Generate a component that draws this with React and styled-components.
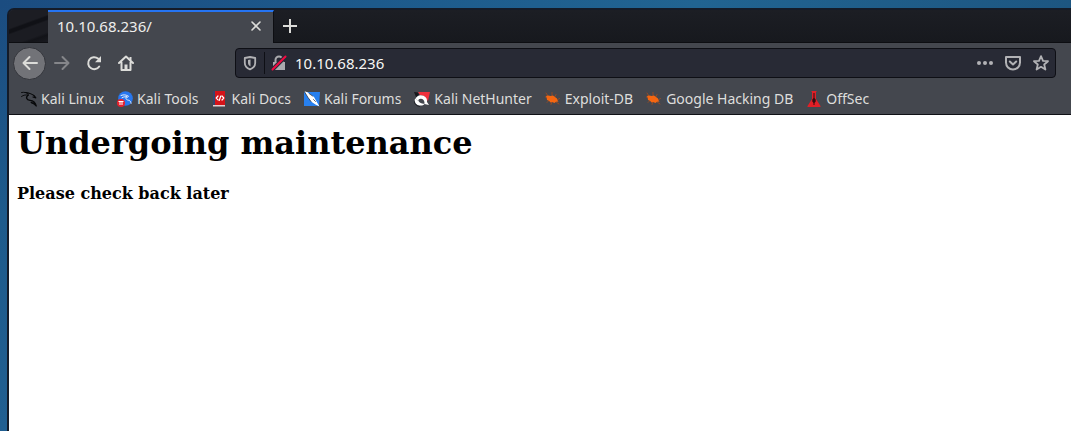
import React from "react";
import styled, { createGlobalStyle } from "styled-components";

const GlobalStyle = createGlobalStyle`
  * { box-sizing: border-box; }
  html, body { margin: 0; }
  button, input { font: inherit; color: inherit; }
`;

const Desktop = styled.div`
  min-height: 100vh;
  display: flex;
  padding: 8px 0 0 7px;
  background:
    linear-gradient(90deg, #1b4c80 0%, #1d5a8c 35%, #216492 65%, #1d5681 100%) top / 100% 8px no-repeat,
    linear-gradient(180deg, #1b4c80, #1e5b8c 50%, #215f91);
`;

const BrowserWindow = styled.div`
  flex: 1;
  min-width: 0;
  display: flex;
  flex-direction: column;
  border: solid #141b28;
  border-width: 2px 0 0 2px;
  border-radius: 7px 0 0 0;
  background: #44474e;
  color: #eeeeec;
  font: 15px/20px "Noto Sans", sans-serif;
  overflow: hidden;
`;

const TabStrip = styled.div`
  height: 33px;
  display: flex;
  background: linear-gradient(#1c1e24, #17191e);
  border-bottom: 1px solid #0d0e12;
`;

const WindowCorner = styled.div`
  width: 39px;
  background: linear-gradient(160deg, #1c1d23 0 40%, #101116 44% 50%, #1b1c22 54% 78%, #121318 84%, #191a20);
`;

const Tab = styled.div`
  width: 226px;
  height: 33px;
  display: flex;
  align-items: center;
  justify-content: space-between;
  padding: 0 9px 3px;
  border-top: 2px solid #2574f3;
  border-right: 1px solid #0d0e12;
  background: #44474e;
`;

const IconButton = styled.button`
  width: ${(p) => p.$size || 32}px;
  height: ${(p) => p.$size || 32}px;
  display: grid;
  place-items: center;
  flex: none;
  padding: 0;
  border: ${(p) => (p.$round ? "1px solid #33353b" : "0")};
  border-radius: 50%;
  background: ${(p) => (p.$round ? "#727378" : "transparent")};
  color: ${(p) => p.$color || "#dcdcd9"};
`;

const Toolbar = styled.div`
  height: 40px;
  display: flex;
  align-items: center;
  padding: 0 15px 0 4px;
`;

const NavButtons = styled.div`
  width: 222px;
  display: flex;
  align-items: center;
  flex: none;
`;

const AddressBar = styled.div`
  flex: 1;
  min-width: 0;
  height: 30px;
  display: flex;
  align-items: center;
  padding: 0 0 0 1px;
  border: 1px solid #0e0f15;
  border-radius: 4px;
  background: #282a35;
`;

const Divider = styled.span`
  width: 1px;
  height: 22px;
  margin-left: 1px;
  background: #0e0f15;
`;

const AddressInput = styled.input`
  flex: 1;
  min-width: 0;
  padding: 0 0 0 2px;
  border: 0;
  outline: 0;
  background: transparent;
  color: #f6f6f4;
`;

const Bookmarks = styled.nav`
  height: 32px;
  display: flex;
  align-items: center;
  gap: 13px;
  padding: 0 12px;
  border-bottom: 1px solid #101116;
  white-space: nowrap;
  color: #dededc;
  font-size: 14px;
`;

const Bookmark = styled.a`
  display: flex;
  align-items: center;
  gap: 4px;
  color: inherit;
  text-decoration: none;
`;

const Page = styled.main`
  flex: 1;
  padding: 8px;
  background: #fff;
  color: #000;
  font-family: "DejaVu Serif", serif;
`;

const Title = styled.h1`
  margin: 0 0 21px;
  font-size: 32px;
  line-height: 40px;
`;

const Notice = styled.h4`
  margin: 0;
  font-size: 16px;
  line-height: 20px;
`;

const Icon = ({ children, ...rest }) => (
  <svg width="16" height="16" viewBox="0 0 16 16" fill="none" stroke="currentColor" strokeWidth="2"
    strokeLinecap="round" strokeLinejoin="round" aria-hidden="true" {...rest}>
    {children}
  </svg>
);

const Dragon = () => (
  <Icon stroke="#07080a" strokeWidth=".9">
    <path d="M.5 1.500C3.500 1 5.500 1.500 7.500 3M.5 5.500C2.500 4 5 3.500 7.500 4.200" />
    <path d="M4.500 1.500C8 2 11.500 3 13.500 5l1.300 1.800-2.800-.8" strokeWidth="1.200" />
    <path d="M7 4C4.500 6.500 5.500 9 9 9.300c3.500.3 5.500 2.200 6.200 5.700-1.200-2.200-2.700-3-5-3.500" strokeWidth="1.300" />
  </Icon>
);

const Tools = () => (
  <Icon stroke="none">
    <circle cx="8.500" cy="7.500" r="7.300" fill="#2777ef" />
    <path d="M4 4.500c3-1.200 5-.8 7.500.8M5 6.800c2-1.300 3.800-1.300 5.500-.6M9.500 5.500c-1.500 2.600 0 3.300 2.300 3.800 1.500.4 2 1.500 2.300 3" stroke="#e5edfa" strokeWidth="1" />
    <circle cx="4" cy="12" r="4" fill="#e6202c" />
    <path d="M1.500 10.500h5M3 10.500V14M5 10.500V14" stroke="#fff" strokeWidth="1" strokeLinecap="butt" />
  </Icon>
);

const Docs = () => (
  <Icon stroke="none">
    <path d="M1 0h12v15H1z" fill="#d51319" />
    <path d="M1 0h2v14H1z" fill="#34466f" />
    <path d="M1 14h12v1.500H1z" fill="#e3cfd1" />
    <path d="M6 5 4.200 7 6 8.800M10 5l1.800 2L10 9M8.800 5 7.200 9.500" stroke="#fff" strokeWidth="1.200" />
  </Icon>
);

const Forums = () => (
  <Icon stroke="none">
    <path d="M0 1h16l-1 14H0z" fill="#2780ef" />
    <path d="M0 0 4 1.500l6 4.500 2.500 4.500 3 5-4-2-4.500-3L4 6.500z" fill="#fff" />
    <path d="m0 0 4 6.500 3 4M9.500 8.500l2 2M5 2.500l3.500 2.500" stroke="#23252b" strokeWidth=".7" />
  </Icon>
);

const NetHunter = () => (
  <Icon stroke="none">
    <path d="M4 1h12l-2 9-4-5-4-1z" fill="#f0303c" />
    <path d="m0 1 4 .5L5 4 2 6z" fill="#17181d" />
    <path d="M1.500 8C3 4.500 6 3.500 9.500 4.800c3 1.200 4 4 3.500 6.200l2 3-4.500-1c.2-3-.8-5-3.300-5.300C5 7.500 4 8.500 4.500 10z" fill="#fff" />
    <path d="M1 7.500c-1 3.500 1 6.500 4.500 7 2.500.4 4.800-.5 5.500-2-2 .6-5 0-6.500-2.500z" fill="#fff" />
    <path d="M0 10.500c.5 2.500 2.500 4.500 5.500 5" stroke="#17181d" strokeWidth=".8" />
  </Icon>
);

const Bug = () => (
  <Icon stroke="#a54c20" strokeWidth=".8">
    <path d="m1 2 2 3M7 1.500V6M0 6h3M11 3.500 9 7M2 11.500l3-3M6 13.500l1-3M14.500 7.500 12 9M14 13l-3-2" />
    <path d="m1 5 2-.5L6 5l2-.5 2 1.500 2 1.500.3 1.500 1.200 1.500-2.500.3L9.500 12 7 11l-1.500.5L4 9.800 2 9l-.3-2z" fill="#f46611" stroke="none" />
  </Icon>
);

const OffSec = () => (
  <Icon stroke="none">
    <path d="M5 0h6l-1 1v7l4.500 7v1h-13v-1L6 8V1z" fill="#e01f27" />
    <path d="M7.500 2h1v5l1.200 1.500v2L8.500 12v2h-1v-2l-1.200-1.500v-2L7.500 7z" fill="#310c10" />
  </Icon>
);

const bookmarks = [
  ["Kali Linux", Dragon],
  ["Kali Tools", Tools],
  ["Kali Docs", Docs],
  ["Kali Forums", Forums],
  ["Kali NetHunter", NetHunter],
  ["Exploit-DB", Bug],
  ["Google Hacking DB", Bug],
  ["OffSec", OffSec],
];

export default function App() {
  return (
    <Desktop>
      <GlobalStyle />
      <BrowserWindow>
        <TabStrip>
          <WindowCorner />
          <Tab>
            <span>10.10.68.236/</span>
            <IconButton $size={16} aria-label="Close tab">
              <Icon strokeWidth="1.600"><path d="m4 4 8 8M12 4l-8 8" /></Icon>
            </IconButton>
          </Tab>
          <IconButton aria-label="New tab">
            <Icon strokeLinecap="butt"><path d="M8 1v14M1 8h14" /></Icon>
          </IconButton>
        </TabStrip>
        <Toolbar>
          <NavButtons>
            <IconButton $round $size={33} aria-label="Back">
              <Icon><path d="M15 8H2M7.500 2 1.500 8l6 6" /></Icon>
            </IconButton>
            <IconButton $color="#85868a" aria-label="Forward">
              <Icon><path d="M1 8h13M8.500 2l6 6-6 6" /></Icon>
            </IconButton>
            <IconButton aria-label="Reload">
              <Icon>
                <path d="M13.200 11.500A6 6 0 1 1 12 3.500" />
                <path d="M15 1v6.200H9z" fill="currentColor" stroke="none" />
              </Icon>
            </IconButton>
            <IconButton aria-label="Home">
              <Icon>
                <path d="m1 8 7-6.500L15 8M3.500 7.500V15h9V7.500" />
                <path d="M6.500 9.500h3V15h-3z" fill="currentColor" stroke="none" />
                <path d="M12.500 2v3" strokeLinecap="butt" />
              </Icon>
            </IconButton>
          </NavButtons>
          <AddressBar>
            <IconButton $size={26} $color="#b2b2b5" aria-label="Tracking protection">
              <Icon>
                <path d="M8 2 13.200 3v5c0 3-2 5.200-5.200 6.300C4.800 13.200 2.800 11 2.800 8V3z" strokeWidth="1.800" />
                <path d="M8.500 4.500 6 5v3c0 1.500 1 2.800 2.500 3.500z" fill="currentColor" stroke="none" />
              </Icon>
            </IconButton>
            <Divider />
            <IconButton $size={28} $color="#aaaaae" aria-label="Connection is not secure">
              <Icon>
                <path d="M4.500 8V5a3.500 3.500 0 0 1 7 0v3" />
                <path d="M2 7h12v8H2z" fill="currentColor" stroke="none" />
                <path d="M1.500 14.500 14.500 1.500" stroke="#282a35" strokeWidth="4" />
                <path d="M1.500 14.500 14.500 1.500" stroke="#f20a42" />
              </Icon>
            </IconButton>
            <AddressInput aria-label="Address" defaultValue="10.10.68.236" />
            <IconButton $size={28} $color="#b2b2b5" aria-label="Page actions">
              <Icon fill="currentColor" stroke="none">
                <circle cx="2" cy="8" r="2" /><circle cx="8" cy="8" r="2" /><circle cx="14" cy="8" r="2" />
              </Icon>
            </IconButton>
            <IconButton $size={28} $color="#b2b2b5" aria-label="Save to Pocket">
              <Icon>
                <path d="M1 2h14v5.500a7 7 0 0 1-14 0z" />
                <path d="m4.800 6.500 3.200 3 3.200-3" />
              </Icon>
            </IconButton>
            <IconButton $size={28} $color="#b2b2b5" aria-label="Bookmark this page">
              <Icon><path d="m8 1.200 2 4.600 5 .4-3.800 3.300 1.200 5L8 11.800l-4.400 2.700 1.200-5L1 6.200l5-.4z" strokeWidth="1.800" /></Icon>
            </IconButton>
          </AddressBar>
        </Toolbar>
        <Bookmarks aria-label="Bookmarks">
          {bookmarks.map(([label, Glyph]) => (
            <Bookmark key={label} href="#">
              <Glyph />
              {label}
            </Bookmark>
          ))}
        </Bookmarks>
        <Page>
          <Title>Undergoing maintenance</Title>
          <Notice>Please check back later</Notice>
        </Page>
      </BrowserWindow>
    </Desktop>
  );
}
